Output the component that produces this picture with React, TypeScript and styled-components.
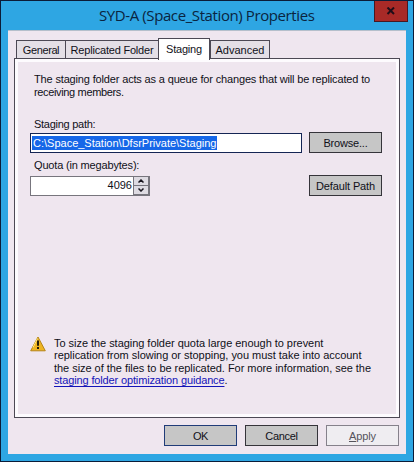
import React from "react";
import styled, { createGlobalStyle } from "styled-components";

const Global = createGlobalStyle`
  * { box-sizing: border-box; }
  body { margin: 0; font-family: "Liberation Sans", Arial, sans-serif; font-size: 11px; color: #101018; }
`;

const Window = styled.main`
  width: 414px;
  height: 462px;
  border: 1px solid #0b1c38;
  padding: 0 7px 7px;
  background: #2ea6e3;
  display: flex;
  flex-direction: column;
  overflow: hidden;
`;

const TitleBar = styled.header`
  height: 29px;
  flex: none;
  display: grid;
  grid-template-columns: 366px 34px;
  margin-right: -2px;
`;

const Title = styled.h1`
  margin: 0;
  padding: 3px 0 0 91px;
  font: 400 15px/22px "Open Sans", "Noto Sans", sans-serif;
  white-space: nowrap;
  color: #0a2440;
`;

const Close = styled.button`
  width: 34px;
  height: 21px;
  padding: 0;
  border: 1px solid #481822;
  border-top: 0;
  background: #a82a27;
  display: flex;
  align-items: center;
  justify-content: center;
`;

const Client = styled.section`
  width: 398px;
  flex: 1;
  background: #efe6ef;
  border-top: 1px solid #b5bfcb;
  padding: 8px 6px 0;
  display: flex;
  flex-direction: column;
`;

const Tabs = styled.nav`
  display: flex;
  align-items: flex-end;
  height: 19px;
  padding-left: 2px;
  flex: none;
`;

const Tab = styled.button<{ $w: number; $active?: boolean }>`
  width: ${(p) => p.$w}px;
  height: ${(p) => (p.$active ? 22 : 18)}px;
  margin-bottom: ${(p) => (p.$active ? -2 : 0)}px;
  position: relative;
  flex: none;
  padding: ${(p) => (p.$active ? "0 0 2px" : "1px 0 0")};
  border: 1px solid #4c4854;
  border-bottom: 0;
  border-right-width: ${(p) => (p.$w === 60 || p.$active ? 1 : 0)}px;
  background: ${(p) => (p.$active ? "#fff" : "#e4dfe6")};
  color: #101018;
  font: inherit;
  display: flex;
  justify-content: center;
  align-items: center;
`;

const Panel = styled.div`
  width: 386px;
  height: 360px;
  flex: none;
  border: 1px solid #4c4854;
  background: #efe6ef;
  box-shadow: inset 0 0 0 3px #fdfbfe;
  padding: 14px 16px 0 15px;
`;

const Line = styled.span<{ $ls?: number }>`
  display: block;
  width: max-content;
  white-space: pre;
  line-height: inherit;
  letter-spacing: ${(p) => p.$ls ?? 0}px;
`;

const Intro = styled.p`
  margin: 0 0 0 4px;
  line-height: 13px;
  height: 45px;
`;

const Label = styled.label`
  display: block;
  height: 14px;
  padding-left: 4px;
  line-height: 13px;
`;

const Row = styled.div`
  display: flex;
  justify-content: space-between;
  align-items: flex-end;
  height: 21px;
  width: 352px;
`;

const PathField = styled.div`
  width: 272px;
  height: 20px;
  border: 1px solid #142554;
  background: #fff;
  padding: 2px 1px;
`;

const Selection = styled.span`
  display: block;
  width: 185px;
  height: 14px;
  padding-left: 1px;
  line-height: 14px;
  background: #1667e8;
  color: #fff;
`;

const Button = styled.button<{ $kind?: "primary" | "disabled" }>`
  width: 73px;
  height: 21px;
  padding: 0;
  border: 1px solid ${(p) => (p.$kind === "primary" ? "#203c78" : p.$kind ? "#85818b" : "#35343a")};
  background: ${(p) => (p.$kind === "disabled" ? "#efedf1" : "#c6c6c6")};
  color: ${(p) => (p.$kind === "disabled" ? "#55535c" : "#101018")};
  font: inherit;
  display: flex;
  align-items: center;
  justify-content: center;
`;

const QuotaLabel = styled(Label)`
  margin-top: 6px;
  height: 16px;
`;

const Quota = styled.div`
  width: 120px;
  height: 20px;
  border: 1px solid #77757d;
  background: #fff;
  display: grid;
  grid-template-columns: 1fr 16px;
`;

const QuotaValue = styled.span`
  display: flex;
  justify-content: flex-end;
  line-height: 16px;
  padding-right: 1px;
`;

const Spinner = styled.div`
  display: grid;
  grid-template-rows: 9px 9px;
  border-left: 1px solid #77757d;
  border-right: 1px solid #77757d;
  background: #dedbe2;
`;

const Step = styled.button`
  padding: 0;
  border: 0;
  border-bottom: 1px solid #77757d;
  background: transparent;
  display: flex;
  align-items: center;
  justify-content: center;
`;

const Notice = styled.div`
  display: flex;
  margin-top: 140px;
`;

const WarningIcon = styled.svg`
  width: 16px;
  height: 16px;
  flex: none;
  margin-right: 8px;
`;

const NoticeText = styled.p`
  margin: 1px 0 0;
  line-height: 12.4px;
`;

const Link = styled.a`
  color: #1414b8;
  text-decoration: underline;
  text-underline-offset: 2px;
`;

const Actions = styled.footer`
  display: flex;
  justify-content: flex-end;
  gap: 8px;
  padding-top: 7px;
  margin-right: 1px;
`;

export default function App() {
  return (
    <>
      <Global />
      <Window>
        <TitleBar>
          <Title><Line $ls={-0.4}>SYD-A (Space_Station) Properties</Line></Title>
          <Close aria-label="Close">
            <svg width="10" height="8" viewBox="0 0 10 8"><path d="M1.5 .5L8 7M8 .5L1.5 7" stroke="#200d18" strokeWidth="2" /></svg>
          </Close>
        </TitleBar>
        <Client>
          <Tabs>
            <Tab $w={49}><Line $ls={-0.4}>General</Line></Tab>
            <Tab $w={93}><Line $ls={-0.2}>Replicated Folder</Line></Tab>
            <Tab $w={52} $active><Line $ls={-0.2}>Staging</Line></Tab>
            <Tab $w={60}><Line>Advanced</Line></Tab>
          </Tabs>
          <Panel>
            <Intro>
              <Line $ls={-0.155}>The staging folder acts as a queue for changes that will be replicated to</Line>
              <Line $ls={-0.35}>receiving members.</Line>
            </Intro>
            <Label><Line $ls={-0.27}>Staging path:</Line></Label>
            <Row>
              <PathField><Selection><Line>C:\Space_Station\DfsrPrivate\Staging</Line></Selection></PathField>
              <Button><Line $ls={-0.2}>Browse...</Line></Button>
            </Row>
            <QuotaLabel><Line $ls={-0.17}>Quota (in megabytes):</Line></QuotaLabel>
            <Row>
              <Quota>
                <QuotaValue><Line>4096</Line></QuotaValue>
                <Spinner>
                  <Step aria-label="Increase"><svg width="6" height="4" viewBox="0 0 6 4"><path d="M.5 3.5L3 1L5.5 3.5" fill="none" stroke="#18151d" strokeWidth="1.5" /></svg></Step>
                  <Step aria-label="Decrease"><svg width="6" height="4" viewBox="0 0 6 4"><path d="M.5 .5L3 3L5.5 .5" fill="none" stroke="#18151d" strokeWidth="1.5" /></svg></Step>
                </Spinner>
              </Quota>
              <Button><Line $ls={-0.12}>Default Path</Line></Button>
            </Row>
            <Notice>
              <WarningIcon viewBox="0 0 16 16">
                <path d="M8 1L15.3 14.8H.7Z" fill="#eeb421" stroke="#b58417" strokeLinejoin="round" />
                <path d="M7.5 2.5L3 11.5" stroke="#ffe478" />
                <path d="M8 4.5v5.3M8 11.1v2" stroke="#241b08" strokeWidth="2" />
              </WarningIcon>
              <NoticeText>
                <Line $ls={-0.04}>To size the staging folder quota large enough to prevent</Line>
                <Line $ls={-0.03}>replication from slowing or stopping, you must take into account</Line>
                <Line $ls={-0.04}>the size of the files to be replicated. For more information, see the</Line>
                <Line $ls={-0.14}><Link>staging folder optimization guidance</Link>.</Line>
              </NoticeText>
            </Notice>
          </Panel>
          <Actions>
            <Button $kind="primary"><Line $ls={-0.5}>OK</Line></Button>
            <Button><Line $ls={-0.3}>Cancel</Line></Button>
            <Button $kind="disabled"><Line $ls={-0.1}><u>A</u>pply</Line></Button>
          </Actions>
        </Client>
      </Window>
    </>
  );
}
